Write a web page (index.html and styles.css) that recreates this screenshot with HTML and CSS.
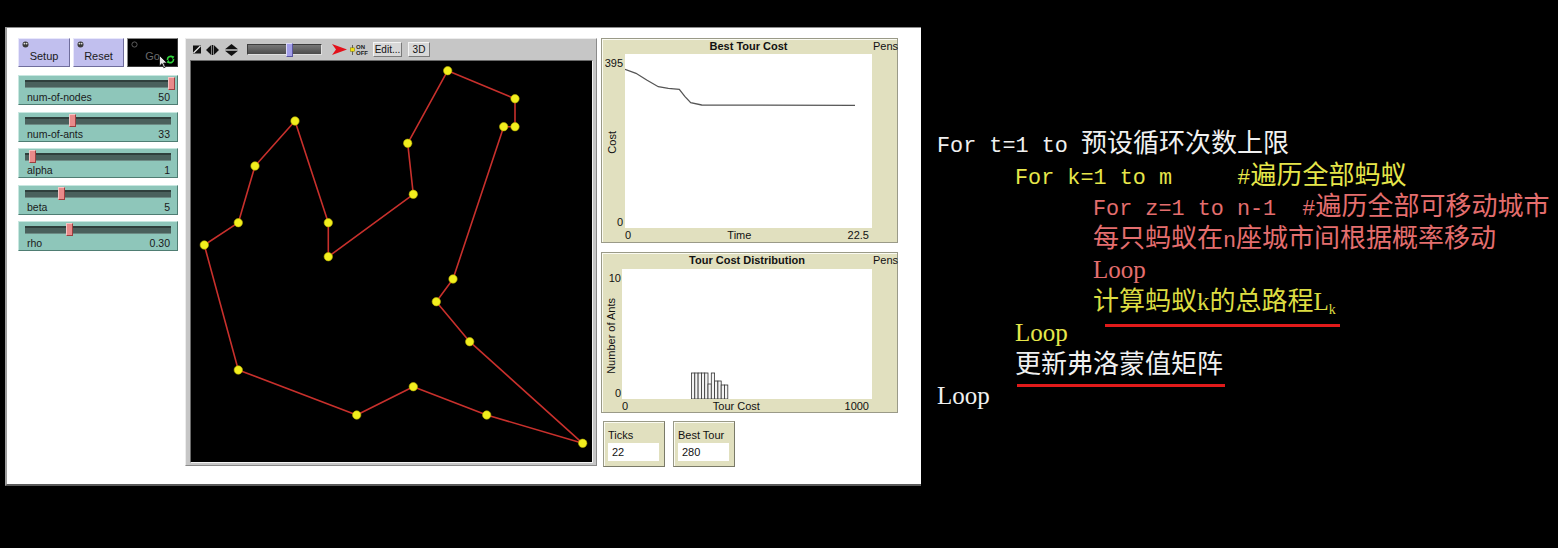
FILE: index.html
```html
<!DOCTYPE html>
<html>
<head>
<meta charset="utf-8">
<title>Ant System TSP</title>
<link rel="stylesheet" href="styles.css">
</head>
<body>
<div class="stage">
  <div class="nl-window">
    <div class="controls">
      <div class="buttons">
        <div class="btn btn-setup">
          <svg class="btn-icon" viewBox="0 0 7 7"><circle cx="3.5" cy="3.5" r="3" fill="#3a3a3a"/><circle cx="2.4" cy="2.6" r="0.9" fill="#ddd"/><circle cx="4.6" cy="2.6" r="0.9" fill="#ddd"/></svg>
          <span>Setup</span>
        </div>
        <div class="btn">
          <svg class="btn-icon" viewBox="0 0 7 7"><circle cx="3.5" cy="3.5" r="3" fill="#3a3a3a"/><circle cx="2.4" cy="2.6" r="0.9" fill="#ddd"/><circle cx="4.6" cy="2.6" r="0.9" fill="#ddd"/></svg>
          <span>Reset</span>
        </div>
        <div class="btn btn-go">
          <svg class="btn-icon" viewBox="0 0 7 7"><circle cx="3.5" cy="3.5" r="2.6" fill="none" stroke="#666" stroke-width="0.9"/></svg>
          <span>Go</span>
          <svg class="forever" viewBox="0 0 9 9"><path d="M1.6 5 A3 3 0 0 1 6.6 2.2" fill="none" stroke="#2fd23a" stroke-width="1.6"/><path d="M5.4 0.6 L8.4 1.6 L6.6 4.2 Z" fill="#2fd23a"/><path d="M7.4 4 A3 3 0 0 1 2.4 6.8" fill="none" stroke="#2fd23a" stroke-width="1.6"/><path d="M3.6 8.4 L0.6 7.4 L2.4 4.8 Z" fill="#2fd23a"/></svg>
          <svg class="cursor" viewBox="0 0 9 14"><path d="M0.5 0.5 L0.5 11 L3 8.6 L4.8 12.8 L6.4 12.1 L4.6 8 L8 8 Z" fill="#e6e6e6" stroke="#111" stroke-width="0.8"/></svg>
        </div>
      </div>
      <div class="sliders">
        <div class="slider">
          <div class="track"><div class="handle" style="left:143px"></div></div>
          <div class="slider-text"><span>num-of-nodes</span><span>50</span></div>
        </div>
        <div class="slider">
          <div class="track"><div class="handle" style="left:44px"></div></div>
          <div class="slider-text"><span>num-of-ants</span><span>33</span></div>
        </div>
        <div class="slider">
          <div class="track"><div class="handle" style="left:4px"></div></div>
          <div class="slider-text"><span>alpha</span><span>1</span></div>
        </div>
        <div class="slider">
          <div class="track"><div class="handle" style="left:33px"></div></div>
          <div class="slider-text"><span>beta</span><span>5</span></div>
        </div>
        <div class="slider">
          <div class="track"><div class="handle" style="left:41px"></div></div>
          <div class="slider-text"><span>rho</span><span>0.30</span></div>
        </div>
      </div>
    </div>

    <div class="view">
      <div class="toolbar">
        <svg class="tb-shape" viewBox="0 0 8 9"><rect x="0" y="0.5" width="8" height="8" fill="#111"/><path d="M0.5 8 L7.5 1" stroke="#e8e8e8" stroke-width="1.2"/></svg>
        <svg class="tb-lr" viewBox="0 0 13 10"><path d="M0 5 L5.2 0 L5.2 10 Z" fill="#111"/><rect x="5.8" y="0" width="1.4" height="10" fill="#111"/><path d="M13 5 L7.8 0 L7.8 10 Z" fill="#111"/></svg>
        <svg class="tb-ud" viewBox="0 0 13 12"><path d="M6.5 0 L13 5.2 L0 5.2 Z" fill="#111"/><path d="M6.5 12 L13 6.8 L0 6.8 Z" fill="#111"/></svg>
        <div class="speed"><div class="speed-handle"></div></div>
        <svg class="tb-arrow" viewBox="0 0 15 11"><path d="M0 0 L15 5.5 L0 11 L4 5.5 Z" fill="#e3101a"/></svg>
        <div class="onoff">
          <svg class="onoff-switch" viewBox="0 0 7 14"><rect x="3" y="0" width="1" height="14" fill="#333"/><rect x="0.5" y="4" width="6" height="5" fill="#f0e010" stroke="#6a6000" stroke-width="0.6"/></svg>
          <span class="onoff-text"><span>ON</span><span>OFF</span></span>
        </div>
        <div class="tb-btn tb-edit">Edit...</div>
        <div class="tb-btn tb-3d">3D</div>
      </div>
      <div class="world-frame">
        <div class="world">
          <svg class="world-svg" viewBox="0 0 401 401">
            <polygon points="256.7,9.7 324,37.7 324,65.7 312.7,65.7 262,218 245.3,240.7 278.7,280.7 391.7,382.3 295.7,354 222.3,325.7 165.7,354 47.3,309 13.3,184 47.3,161.7 64,105 104,60 137.3,161.7 137.3,195.7 222.3,133.3 216.7,82.3" fill="none" stroke="#c8302c" stroke-width="1.6" stroke-linejoin="round"/>
            <g fill="#f2ee1e" stroke="#b8b000" stroke-width="0.6">
              <circle cx="256.7" cy="9.7" r="4.2"/>
              <circle cx="324" cy="37.7" r="4.2"/>
              <circle cx="324" cy="65.7" r="4.2"/>
              <circle cx="312.7" cy="65.7" r="4.2"/>
              <circle cx="262" cy="218" r="4.2"/>
              <circle cx="245.3" cy="240.7" r="4.2"/>
              <circle cx="278.7" cy="280.7" r="4.2"/>
              <circle cx="391.7" cy="382.3" r="4.2"/>
              <circle cx="295.7" cy="354" r="4.2"/>
              <circle cx="222.3" cy="325.7" r="4.2"/>
              <circle cx="165.7" cy="354" r="4.2"/>
              <circle cx="47.3" cy="309" r="4.2"/>
              <circle cx="13.3" cy="184" r="4.2"/>
              <circle cx="47.3" cy="161.7" r="4.2"/>
              <circle cx="64" cy="105" r="4.2"/>
              <circle cx="104" cy="60" r="4.2"/>
              <circle cx="137.3" cy="161.7" r="4.2"/>
              <circle cx="137.3" cy="195.7" r="4.2"/>
              <circle cx="222.3" cy="133.3" r="4.2"/>
              <circle cx="216.7" cy="82.3" r="4.2"/>
            </g>
          </svg>
        </div>
      </div>
    </div>

    <div class="plots">
      <div class="plot plot-best">
        <div class="plot-title">Best Tour Cost</div>
        <div class="plot-pens">Pens</div>
        <div class="plot-y">
          <span>395</span>
          <span class="axis-name">Cost</span>
          <span>0</span>
        </div>
        <div class="plot-area">
          <svg class="plot-svg" viewBox="0 0 247 174"><polyline points="0,15.3 11,19.3 21.7,26 33.3,32.7 43.3,34.3 54.3,35.3 60,42.7 65.7,48.7 76.7,51 230,51.3" fill="none" stroke="#555" stroke-width="1.3"/></svg>
        </div>
        <div class="plot-x"><span>0</span><span>Time</span><span>22.5</span></div>
      </div>

      <div class="plot plot-dist">
        <div class="plot-title">Tour Cost Distribution</div>
        <div class="plot-pens">Pens</div>
        <div class="plot-y">
          <span>10</span>
          <span class="axis-name">Number of Ants</span>
          <span>0</span>
        </div>
        <div class="plot-area">
          <svg class="plot-svg" viewBox="0 0 250 130">
            <g fill="#f4f4f4" stroke="#333" stroke-width="0.8">
              <rect x="69.5" y="104" width="3.3" height="26"/>
              <rect x="72.8" y="104" width="3.3" height="26"/>
              <rect x="76.1" y="104" width="3.3" height="26"/>
              <rect x="79.4" y="104" width="3.3" height="26"/>
              <rect x="82.7" y="104" width="3.3" height="26"/>
              <rect x="86" y="115" width="3.3" height="15"/>
              <rect x="89.3" y="104" width="3.3" height="26"/>
              <rect x="92.6" y="112" width="3.3" height="18"/>
              <rect x="95.9" y="112" width="3.3" height="18"/>
              <rect x="99.2" y="116" width="3.3" height="14"/>
              <rect x="102.5" y="116" width="3.3" height="14"/>
            </g>
          </svg>
        </div>
        <div class="plot-x"><span>0</span><span>Tour Cost</span><span>1000</span></div>
      </div>

      <div class="monitors">
        <div class="monitor">
          <div class="monitor-label">Ticks</div>
          <div class="monitor-value">22</div>
        </div>
        <div class="monitor">
          <div class="monitor-label">Best Tour</div>
          <div class="monitor-value">280</div>
        </div>
      </div>
    </div>
  </div>

  <div class="pseudo">
    <div class="ln w"><span class="m">For t=1 to </span>预设循环次数上限</div>
    <div class="ln y i1"><span class="m">For k=1 to m     #</span>遍历全部蚂蚁</div>
    <div class="ln p i2"><span class="m">For z=1 to n-1  #</span>遍历全部可移动城市</div>
    <div class="ln p i2">每只蚂蚁在<span class="m">n</span>座城市间根据概率移动</div>
    <div class="ln p i2"><span class="s">Loop</span></div>
    <div class="ln y2 i2"><span class="ul ul1">计算蚂蚁<span class="s">k</span>的总路程<span class="s">L<sub class="sub">k</sub></span></span></div>
    <div class="ln y i1"><span class="s">Loop</span></div>
    <div class="ln w i1"><span class="ul ul2">更新弗洛蒙值矩阵</span></div>
    <div class="ln w"><span class="s">Loop</span></div>
  </div>
</div>
</body>
</html>
```

FILE: styles.css
```css
* { box-sizing: border-box; }

body {
  margin: 0;
  background: #000;
  width: 1558px;
  height: 548px;
  overflow: hidden;
  font-family: "Liberation Sans", Arial, sans-serif;
}

.stage {
  display: flex;
  align-items: flex-start;
  padding: 27px 0 0 5px;
}

/* ---------- NetLogo window ---------- */
.nl-window {
  flex: none;
  width: 916px;
  height: 459px;
  background: #fff;
  border-top: 1px solid #8c8c8c;
  border-left: 2px solid #9c9c9c;
  border-bottom: 2px solid #5a5a5a;
  display: flex;
  align-items: flex-start;
  padding: 10px 0 0 11px;
  font-size: 11px;
  color: #111;
}

.controls { flex: none; width: 160px; }

.buttons { display: flex; gap: 3px; }

.btn {
  position: relative;
  width: 51px;
  height: 29px;
  background: #c1bfee;
  border: 1px solid;
  border-color: #e8e7fb #6f6d9c #6f6d9c #e8e7fb;
  text-align: center;
  padding-top: 11px;
  line-height: 13px;
  font-size: 11px;
  color: #1a1a1a;
}
.btn-setup { width: 52px; }
.btn-go {
  background: #000;
  border-color: #8a8a8a #3a3a3a #3a3a3a #8a8a8a;
  color: #6a6a6a;
}
.btn-icon { position: absolute; left: 3px; top: 2px; width: 7px; height: 7px; }
.forever { position: absolute; right: 2px; bottom: 2px; width: 9px; height: 9px; }
.cursor { position: absolute; left: 31px; top: 16px; width: 9px; height: 14px; }

.sliders {
  margin-top: 8px;
  display: flex;
  flex-direction: column;
  gap: 6.5px;
}
.slider {
  height: 30px;
  background: #8ec6ba;
  border: 1px solid;
  border-color: #c8e7e0 #4f7d73 #4f7d73 #c8e7e0;
  padding: 4px 6px 0 6px;
}
.track {
  position: relative;
  height: 8px;
  background: #4a605c;
  border-top: 2px solid #2f3f3c;
  border-bottom: 1px solid #6d8b85;
}
.handle {
  position: absolute;
  top: -5px;
  width: 7px;
  height: 13px;
  background: #e98a8a;
  border: 1px solid;
  border-color: #f7c4c4 #9a4040 #9a4040 #f7c4c4;
}
.slider-text {
  display: flex;
  justify-content: space-between;
  margin-top: 3px;
  line-height: 12px;
  padding: 0 1px 0 2px;
  font-size: 10.5px;
  color: #1a1a1a;
}

/* ---------- View ---------- */
.view {
  flex: none;
  margin-left: 7px;
  width: 412px;
  height: 428px;
  background: #c6c6c6;
  border: 1px solid;
  border-color: #ececec #8a8a8a #8a8a8a #ececec;
  display: flex;
  flex-direction: column;
}
.toolbar {
  height: 21px;
  display: flex;
  align-items: center;
  padding-left: 7px;
}
.tb-shape { width: 8px; height: 9px; }
.tb-lr { width: 13px; height: 10px; margin-left: 5px; }
.tb-ud { width: 13px; height: 12px; margin-left: 6px; }
.speed {
  position: relative;
  margin-left: 9px;
  width: 75px;
  height: 11px;
  background: linear-gradient(#777, #4c4c4c);
  border: 1px solid;
  border-color: #3c3c3c #e0e0e0 #e0e0e0 #3c3c3c;
}
.speed-handle {
  position: absolute;
  left: 38px;
  top: -2px;
  width: 7px;
  height: 14px;
  background: #a29ee9;
  border: 1px solid;
  border-color: #dcdaf8 #5a56a0 #5a56a0 #dcdaf8;
}
.tb-arrow { width: 15px; height: 11px; margin-left: 10px; }
.onoff {
  margin-left: 3px;
  width: 18px;
  height: 14px;
  display: flex;
  align-items: center;
}
.onoff-switch { width: 7px; height: 14px; }
.onoff-text {
  display: flex;
  flex-direction: column;
  font-size: 6px;
  line-height: 6px;
  font-weight: bold;
  color: #222;
  margin-left: 1px;
}
.tb-btn {
  height: 15px;
  background: #d8d8d8;
  border: 1px solid;
  border-color: #f4f4f4 #7a7a7a #7a7a7a #f4f4f4;
  font-size: 10px;
  line-height: 13px;
  text-align: center;
  color: #111;
}
.tb-edit { margin-left: 5px; width: 29px; }
.tb-3d { margin-left: 6px; width: 22px; }

.world-frame { padding: 0 4px; }
.world {
  width: 403px;
  height: 403px;
  background: #000;
  border: 1px solid;
  border-color: #6a6a6a #f2f2f2 #f2f2f2 #6a6a6a;
}
.world-svg { display: block; width: 401px; height: 401px; }

/* ---------- Plots ---------- */
.plots {
  flex: none;
  margin-left: 4px;
  width: 297px;
  display: flex;
  flex-direction: column;
}
.plot {
  background: #e1e0bf;
  border: 1px solid #9a9a88;
  box-shadow: inset 1px 1px 0 #fbfbf2;
  display: grid;
  font-size: 11px;
  color: #111;
}
.plot-best {
  height: 205px;
  grid-template-columns: 23px 247px 1fr;
  grid-template-rows: 15px 174px 1fr;
}
.plot-dist {
  margin-top: 9px;
  height: 161px;
  grid-template-columns: 20px 250px 1fr;
  grid-template-rows: 16px 130px 1fr;
}
.plot-title {
  grid-column: 2;
  grid-row: 1;
  text-align: center;
  font-weight: bold;
  line-height: 15px;
}
.plot-pens {
  grid-column: 3;
  grid-row: 1;
  line-height: 15px;
  padding-left: 1px;
}
.plot-y {
  grid-column: 1;
  grid-row: 2;
  display: flex;
  flex-direction: column;
  justify-content: space-between;
  align-items: flex-end;
  padding: 3px 2px 0 0;
  line-height: 12px;
}
.plot-dist .plot-y { padding: 3px 1px 0 0; }
.axis-name {
  align-self: center;
  writing-mode: vertical-rl;
  transform: rotate(180deg);
  line-height: 11px;
}
.plot-area { grid-column: 2; grid-row: 2; background: #fff; }
.plot-svg { display: block; width: 100%; height: 100%; }
.plot-x {
  grid-column: 2;
  grid-row: 3;
  display: flex;
  justify-content: space-between;
  line-height: 13px;
  padding: 1px 3px 0 0;
}

.monitors {
  margin-top: 8px;
  display: flex;
  gap: 8px;
  padding-left: 2px;
}
.monitor {
  width: 62px;
  height: 46px;
  background: #e1e0bf;
  border: 1px solid;
  border-color: #9a9a88 #7a7a68 #7a7a68 #9a9a88;
  box-shadow: inset 1px 1px 0 #fbfbf2;
  padding: 7px 5px 0 4px;
  font-size: 11px;
  color: #111;
}
.monitor-label { line-height: 12px; }
.monitor-value {
  margin-top: 2px;
  height: 18px;
  background: #fff;
  line-height: 18px;
  padding-left: 4px;
}

/* ---------- Pseudo code ---------- */
.pseudo {
  flex: none;
  margin: 98px 0 0 16px;
  font-family: "Noto Sans CJK SC", "Liberation Sans", sans-serif;
  font-size: 26px;
}
.ln {
  height: 31.5px;
  line-height: 31.5px;
  white-space: pre;
}
.i1 { padding-left: 78px; }
.i2 { padding-left: 156px; }
.m { font-family: "Liberation Mono", "Noto Sans CJK SC", monospace; font-size: 21.8px; }
.s { font-family: "Liberation Serif", serif; font-size: 25px; }
.sub { font-size: 14px; vertical-align: -4px; line-height: 0; }
.w { color: #f0f0f0; }
.y { color: #e6e64a; }
.y2 { color: #dcdc42; }
.p { color: #e46e6e; }
.ul { position: relative; }
.ul::after {
  content: "";
  position: absolute;
  top: 100%;
  height: 3px;
  background: #e01a1a;
}
.ul1::after { left: 12px; right: -4px; margin-top: 7px; }
.ul2::after { left: 2px; right: -2px; margin-top: 4px; }
```
